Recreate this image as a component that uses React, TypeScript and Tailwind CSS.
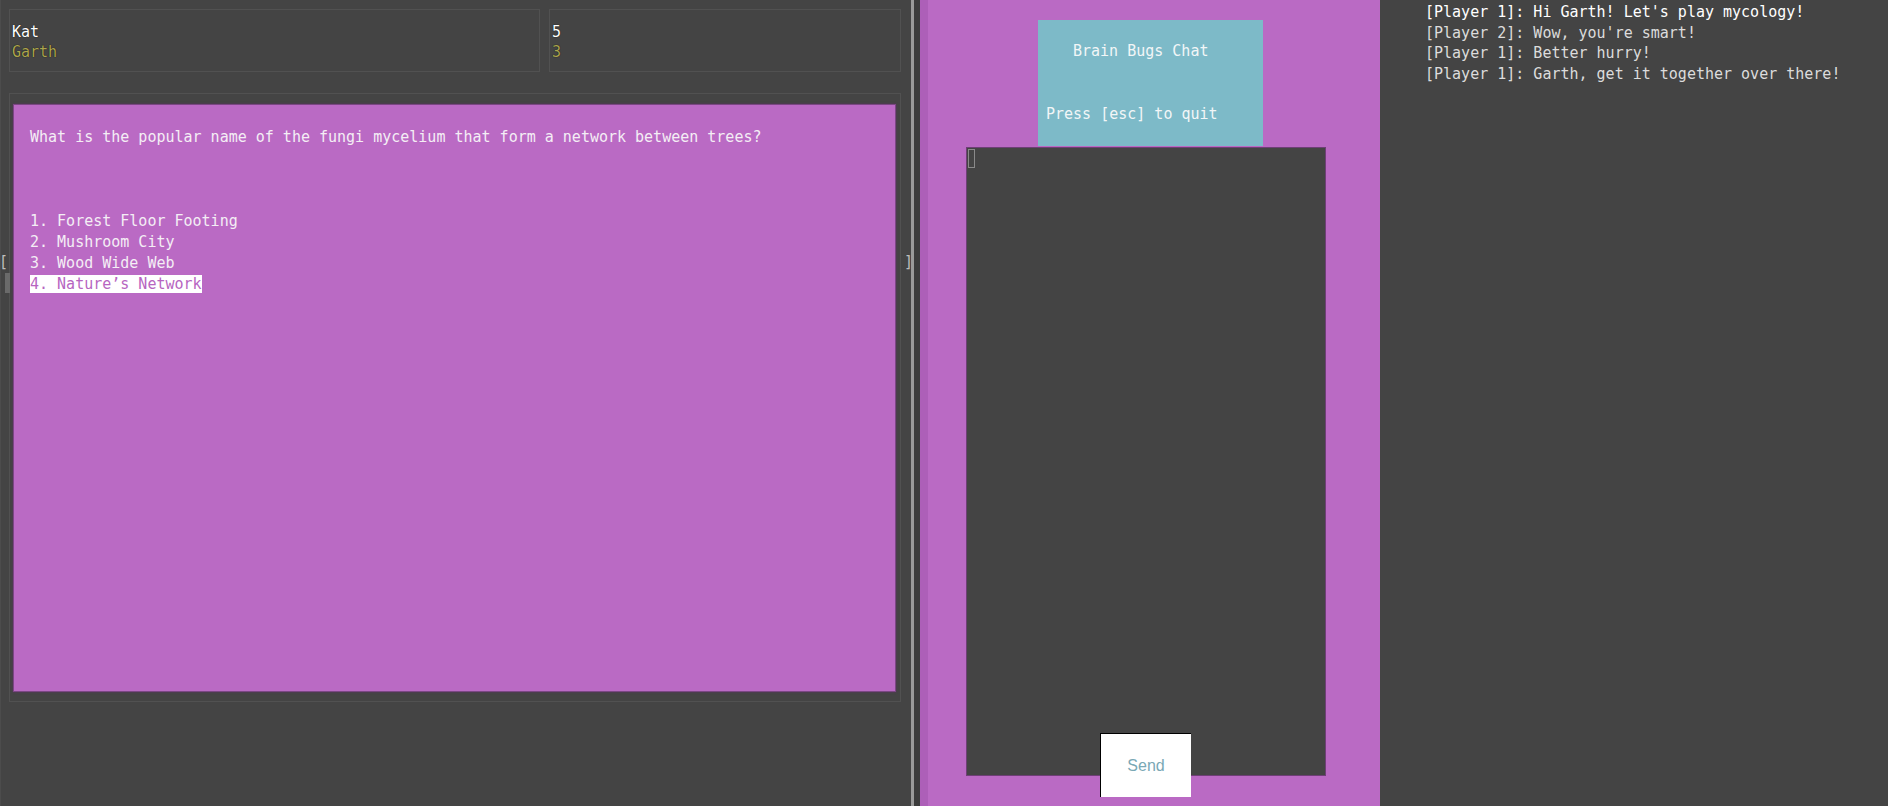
import React from "react";

const mono = { fontFamily: '"DejaVu Sans Mono", "Liberation Mono", monospace' };

const answers = [
  "1. Forest Floor Footing",
  "2. Mushroom City",
  "3. Wood Wide Web",
  "4. Nature’s Network",
];

const messages = [
  { text: "[Player 1]: Hi Garth! Let's play mycology!", bright: true },
  { text: "[Player 2]: Wow, you're smart!", bright: false },
  { text: "[Player 1]: Better hurry!", bright: false },
  { text: "[Player 1]: Garth, get it together over there!", bright: false },
];

function ScoreBox({ top, bottom, width }: { top: string; bottom: string; width: string }) {
  return (
    <div className={`${width} h-[63px] border border-[#515151] pl-[2px] pt-[12px] text-[15px] leading-[20px]`}>
      <div className="text-white [text-shadow:0_0_1px_#000]">{top}</div>
      <div className="text-[#aca54f] [text-shadow:0_0_1px_#000]">{bottom}</div>
    </div>
  );
}

export default function App() {
  const selected = 3;

  return (
    <div className="flex h-[806px] w-full overflow-hidden bg-[#444444]" style={mono}>
      {/* game panel */}
      <div className="relative w-[911px] shrink-0 border-l border-[#4c4c4c] pl-[8px] pr-[10px] pt-[9px]">
        <div className="flex gap-[9px]">
          <ScoreBox top="Kat" bottom="Garth" width="w-[531px]" />
          <ScoreBox top="5" bottom="3" width="w-[352px]" />
        </div>

        <div className="mt-[21px] h-[609px] border border-[#515151] pl-[3px] pr-[4px] pt-[10px]">
          <div className="h-[588px] border border-[#7b4784] bg-[#ba6ac4] pl-[16px] pt-[22px] text-[15px] leading-[21px] text-[#f4eef5] shadow-[0_0_2px_#5a2f60]">
            <div>What is the popular name of the fungi mycelium that form a network between trees?</div>
            <div className="h-[63px]" />
            {answers.map((a, i) => (
              <div key={a}>
                <span className={i === selected ? "bg-white text-[#b765c1]" : ""}>{a}</span>
              </div>
            ))}
          </div>
        </div>

        {/* scroll markers */}
        <span className="absolute left-[-2px] top-[252px] text-[15px] leading-[21px] text-[#bdbdbd]">[</span>
        <span className="absolute left-[4px] top-[273px] h-[20px] w-[5px] bg-[#6a6a6a]" />
        <span className="absolute left-[903px] top-[252px] text-[15px] leading-[21px] text-[#bdbdbd]">]</span>
      </div>

      {/* divider */}
      <div className="w-[3px] shrink-0 bg-[#9a9a9a]" />
      <div className="w-[6px] shrink-0 bg-[#3c3c3c]" />

      {/* chat window */}
      <div className="flex w-[460px] shrink-0 bg-[#ba6ac4]">
        <div className="w-[8px] bg-[#ad5fb8]" />
        <div className="flex flex-1 flex-col">
          <div className="ml-[110px] mt-[20px] h-[126px] w-[225px] bg-[#7dbac8] pt-[21px] text-[15px] leading-[21px] text-[#f2f6f7]">
            <div className="pl-[35px]">Brain Bugs Chat</div>
            <div className="h-[42px]" />
            <div className="pl-[8px]">Press [esc] to quit</div>
          </div>
          <div className="relative ml-[38px] mt-[1px] h-[629px] w-[360px] border border-[#6e3f76] bg-[#444444]">
            <span className="absolute left-[1px] top-[1px] h-[19px] w-[7px] border border-[#8a8a8a]" />
          </div>
          <button
            className="relative ml-[172px] mt-[-43px] h-[64px] w-[91px] border-l border-t border-black bg-white text-[16px] text-[#7aa8b5]"
            style={{ fontFamily: '"Liberation Sans", Arial, sans-serif' }}
          >
            Send
          </button>
        </div>
      </div>

      {/* message log */}
      <div className="flex-1 pl-[45px] pt-[2px] text-[15px] leading-[20.5px]">
        {messages.map((m, i) => (
          <div key={i} className={m.bright ? "text-white" : "text-[#dcdcdc]"}>
            {m.text}
          </div>
        ))}
      </div>
    </div>
  );
}
